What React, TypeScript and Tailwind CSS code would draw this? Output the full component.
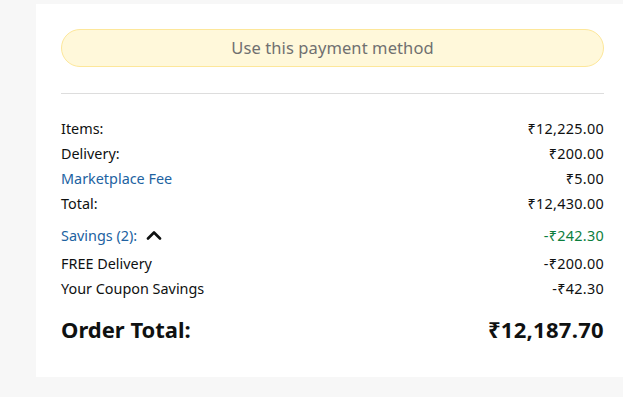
import { ReactNode } from "react"

const font = { fontFamily: '"Noto Sans", "DejaVu Sans", sans-serif' }

function Row({ label, value, labelClass = "", valueClass = "", className = "" }: {
  label: ReactNode
  value: string
  labelClass?: string
  valueClass?: string
  className?: string
}) {
  return (
    <div className={`flex h-[25px] items-center justify-between text-[14.4px] ${className}`}>
      <div className={`flex items-center ${labelClass}`}>{label}</div>
      <span className={`tracking-[0.3px] ${valueClass}`}>{value}</span>
    </div>
  )
}

export default function App() {
  return (
    <div className="h-[397px] w-[623px] overflow-hidden bg-[#f7f7f7] pt-[4px] pl-[36px] text-[#0f1111]" style={font}>
      <div className="flex h-[373px] w-[587px] flex-col bg-white pt-[25px] pl-[25px] pr-[19px]">
        {/* Payment button */}
        <button className="flex h-[38px] w-full items-center justify-center rounded-full border border-[#fde79a] bg-[#fff8da] text-[16.5px] tracking-[0.1px] text-[#707070]">
          Use this payment method
        </button>

        <div className="mt-[26px] h-px w-full bg-[#dddddd]" />

        {/* Summary */}
        <div className="mt-[22px]">
          <Row label="Items:" value="₹12,225.00" />
          <Row label="Delivery:" value="₹200.00" />
          <Row label="Marketplace Fee" value="₹5.00" labelClass="text-[#2162a1]" />
          <Row label="Total:" value="₹12,430.00" />
          <Row
            className="mt-[7px]"
            label={
              <>
                <span className="text-[#2162a1]">Savings (2):</span>
                <svg className="ml-[9px]" width="16" height="10" viewBox="0 0 16 10" fill="none">
                  <path d="M2 8.5L8 2.5L14 8.5" stroke="#0f1111" strokeWidth="2.6" strokeLinecap="round" strokeLinejoin="round" />
                </svg>
              </>
            }
            value="-₹242.30"
            valueClass="text-[#0c7e3d]"
          />
          <Row className="mt-[3px]" label="FREE Delivery" value="-₹200.00" />
          <Row label="Your Coupon Savings" value="-₹42.30" />
        </div>

        <div className="mt-[13px] flex h-[30px] items-center justify-between text-[22px] font-bold">
          <span>Order Total:</span>
          <span className="tracking-[0.3px]">₹12,187.70</span>
        </div>
      </div>
    </div>
  )
}
